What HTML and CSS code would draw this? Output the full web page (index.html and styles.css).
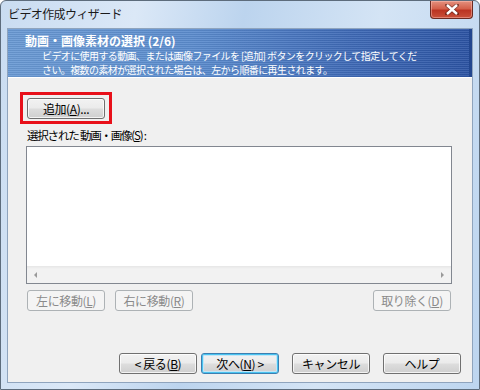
FILE: index.html
```html
<!DOCTYPE html>
<html>
<head>
  <meta charset="utf-8">
  <link rel="stylesheet" href="styles.css">
</head>
<body>
  <div class="window">
	<div class="titlebar">
	  <span class="title">ビデオ作成ウィザード</span>
	  <div class="close-btn">
		<svg width="14" height="11" viewBox="0 0 14 11">
		  <path d="M2 1 L12 10 M12 1 L2 10" stroke="#3a1410" stroke-width="4" stroke-linecap="square" opacity="0.5"/>
		  <path d="M2 1 L12 10 M12 1 L2 10" stroke="#ffffff" stroke-width="2.4"/>
		</svg>
	  </div>
	</div>

	<div class="client">
	  <div class="header">
		<h1>動画・画像素材の選択 (2/6)</h1>
		<p>ビデオに使用する動画、または画像ファイルを [追加] ボタンをクリックして指定してくだ</p>
		<p>さい。複数の素材が選択された場合は、左から順番に再生されます。</p>
	  </div>

	  <div class="body">
		<div class="highlight">
		  <button class="btn">追加(<u>A</u>)...</button>
		</div>
		<div class="list-label">選択された 動画・画像(<u>S</u>) :</div>
		<div class="listbox">
		  <div class="list-items"></div>
		  <div class="hscroll">
			<span class="arrow left"></span>
			<span class="arrow right"></span>
		  </div>
		</div>
		<div class="move-row">
		  <button class="btn disabled">左に移動(<u>L</u>)</button>
		  <button class="btn disabled">右に移動(<u>R</u>)</button>
		  <button class="btn disabled push-right">取り除く(<u>D</u>)</button>
		</div>
	  </div>

	  <div class="footer">
		<button class="btn">&lt; 戻る(<u>B</u>)</button>
		<button class="btn focused">次へ(<u>N</u>) &gt;</button>
		<button class="btn gap-l">キャンセル</button>
		<button class="btn gap-l">ヘルプ</button>
	  </div>
	</div>
  </div>
</body>
</html>
```

FILE: styles.css
```css
:root {
  --frame: #bcd4ee;
  --client-bg: #f0f0f0;
  --header-left: #6a9ad4;
  --header-right: #2c54a4;
  --btn-border: #707070;
  --font-ui: "Noto Sans CJK JP", "Noto Sans", sans-serif;
}

body, html {
  margin: 0;
  padding: 0;
  width: 480px;
  height: 390px;
  overflow: hidden;
  font-family: var(--font-ui);
  font-size: 12px;
  color: #000;
}

.window {
  width: 480px;
  height: 390px;
  box-sizing: border-box;
  display: flex;
  flex-direction: column;
  background: linear-gradient(100deg, #c9dcf1 0%, #dbe8f7 25%, #bcd4ee 45%, #d4e4f5 70%, #bdd5ef 100%);
  border: 1px solid #5d6c7c;
  border-radius: 6px 6px 0 0;
}

.titlebar {
  height: 27px;
  display: flex;
  align-items: flex-start;
  flex-shrink: 0;
}

.title {
  margin: 6px 0 0 7px;
  font-size: 12px;
  line-height: 14px;
  color: #1a1a1a;
  letter-spacing: -0.6px;
}

.close-btn {
  margin-left: auto;
  margin-right: 6px;
  width: 43px;
  height: 18px;
  box-sizing: border-box;
  display: flex;
  align-items: center;
  justify-content: center;
  background: linear-gradient(#e4917f 0%, #d4604a 45%, #bb3422 55%, #c9503a 100%);
  border: 1px solid #6b2a22;
  border-top: none;
  border-radius: 0 0 4px 4px;
  box-shadow: inset 0 0 0 1px rgba(255, 200, 190, 0.45);
}

.client {
  flex: 1;
  margin: 0 6px 6px 6px;
  background: var(--client-bg);
  border: 1px solid #8fa4bd;
  display: flex;
  flex-direction: column;
}

.header {
  height: 48px;
  box-sizing: border-box;
  padding: 4px 0 0 17px;
  color: #fff;
  white-space: nowrap;
  background:
	repeating-linear-gradient(180deg, rgba(255, 255, 255, 0.09) 0px, rgba(255, 255, 255, 0.09) 1px, rgba(0, 0, 0, 0.06) 1px, rgba(0, 0, 0, 0.06) 2px),
	linear-gradient(90deg, var(--header-left) 0%, #5b8cce 40%, #3e69b6 75%, var(--header-right) 100%);
  border-right: 3px solid #23478f;
}

.header h1 {
  margin: 0 0 1px 0;
  font-size: 12px;
  font-weight: bold;
  line-height: 15px;
}

.header p {
  margin: 0 0 0 17px;
  font-size: 10px;
  line-height: 14px;
  letter-spacing: -0.6px;
}

.body {
  padding: 14px 0 0 12px;
  border-top: 1px solid #fff;
}

.btn {
  width: 78px;
  height: 21px;
  padding: 0;
  font-family: var(--font-ui);
  font-size: 12px;
  line-height: 17px;
  color: #000;
  letter-spacing: -0.4px;
  background: linear-gradient(#f2f2f2 0%, #ebebeb 48%, #dddddd 52%, #cfcfcf 100%);
  border: 1px solid var(--btn-border);
  border-radius: 3px;
  box-shadow: inset 0 0 0 1px rgba(255, 255, 255, 0.75);
}

.btn u {
  text-decoration-thickness: 1px;
  text-underline-offset: 1px;
}

.btn.disabled {
  color: #8a8a8a;
  background: #f4f4f4;
  border-color: #adb2b5;
  box-shadow: none;
}

.btn.focused {
  border-color: #3c7fb1;
  box-shadow: inset 0 0 0 1px #48c3f0, inset 0 0 0 2px #c4e5f6;
}

.highlight {
  display: inline-block;
  border: 3px solid #e8101a;
  padding: 3px 4px 2px 4px;
}

.highlight .btn {
  display: block;
}

.list-label {
  margin: 3px 0 0 7px;
  font-size: 11.5px;
  line-height: 16px;
  letter-spacing: -1.2px;
}

.listbox {
  margin: 3px 0 0 6px;
  width: 426px;
  height: 138px;
  box-sizing: border-box;
  border: 1px solid #828790;
  background: #fff;
  display: flex;
  flex-direction: column;
}

.list-items {
  flex: 1;
}

.hscroll {
  height: 17px;
  background: linear-gradient(#e6e6e6, #f2f2f2 3px, #f2f2f2);
  display: flex;
  align-items: center;
  justify-content: space-between;
  padding: 0 7px 0 7px;
}

.arrow {
  width: 0;
  height: 0;
  border-top: 3px solid transparent;
  border-bottom: 3px solid transparent;
}

.arrow.left {
  border-right: 3px solid #9a9a9a;
}

.arrow.right {
  border-left: 3px solid #9a9a9a;
}

.move-row {
  margin: 6px 0 0 7px;
  width: 424px;
  display: flex;
  gap: 10px;
}

.push-right {
  margin-left: auto;
}

.footer {
  margin-top: auto;
  padding: 0 11px 8px 0;
  display: flex;
  justify-content: flex-end;
  gap: 4px;
}

.footer .gap-l {
  margin-left: 9px;
}
```
